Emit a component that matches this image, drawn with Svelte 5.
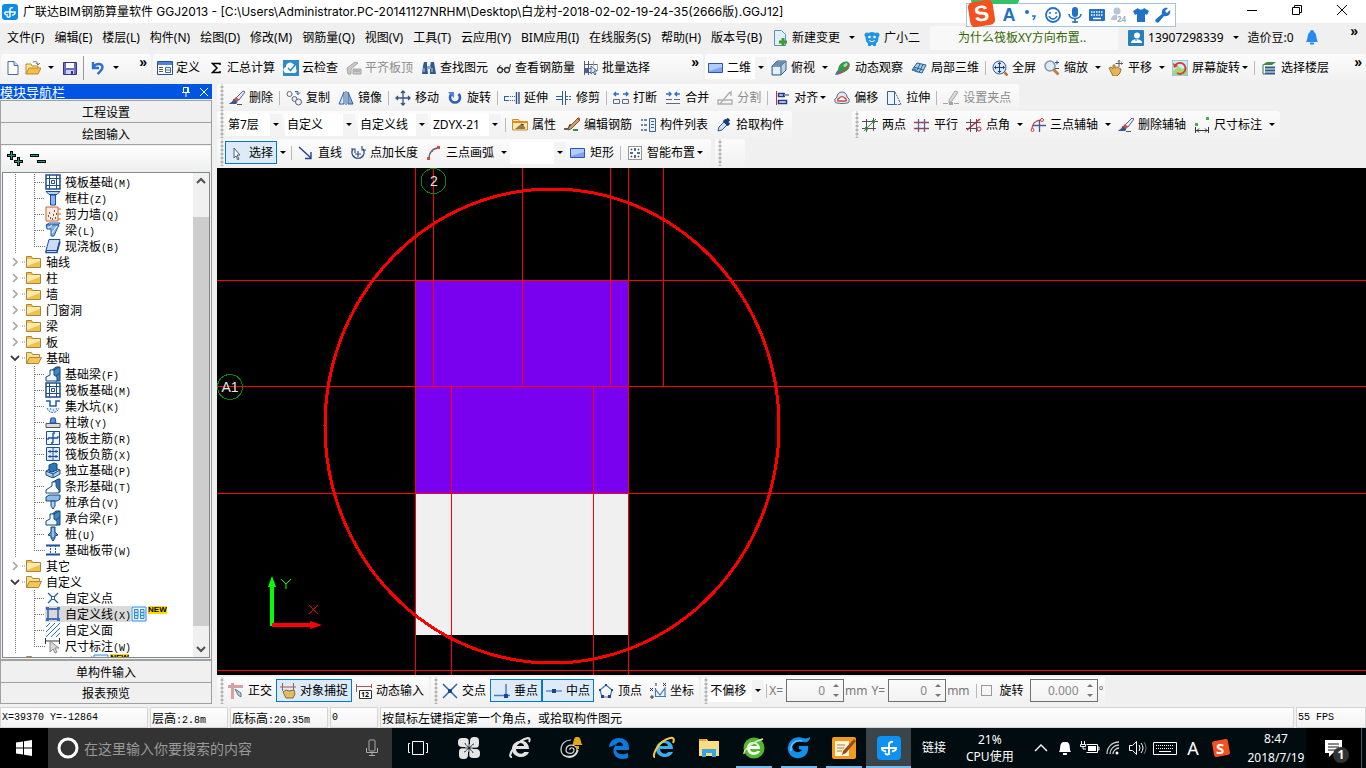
<script>
	const icons = {
		app: `<rect width="16" height="16" rx="3" fill="#0c8ee8"/><path d="M8 13V5a2 2 0 0 1 3-1M3 8h10a2.500 2.500 0 0 1-3 3M3 8a2 2 0 0 0 3 2.500M8 13a2 2 0 0 1-3-1" fill="none" stroke="#fff" stroke-width="1.500"/>`,
		newdoc: `<path d="M3 1.500h6l4 4v9H3z" fill="#fff" stroke="#456c9c"/><path d="M9 1.500v4h4" fill="#cfe0f5" stroke="#456c9c"/>`,
		open: `<path d="M1 14V4h5l1 2h6v3" fill="#ffe79a" stroke="#b98a2c"/><path d="M1 14l3-6h12l-3 6z" fill="#f7bd4a" stroke="#b98a2c"/><path d="M8 2c3-1 5 0 5 3m-2-2 2 2 2-2" fill="none" stroke="#6b7c8c"/>`,
		save: `<path d="M1.500 2.500h13v12h-13z" fill="#6a6bc8" stroke="#33348c"/><path d="M4 3h8v5H4z" fill="#fff"/><path d="M4 10h8v4H4z" fill="#cfd3ea"/><path d="M9 11h2v3H9z" fill="#33348c"/>`,
		undo: `<path d="M3 2v6h6M3.500 7c2-4 9-4 9 0 0 3-2 4-5 7" fill="none" stroke="#2f6fd0" stroke-width="2.400"/>`,
		define: `<path d="M.5 1.500h15v13H.5z" fill="#fff" stroke="#2a4f93"/><path d="M1 2h14v3H1z" fill="#4c83d8"/><path d="M2 7.500h4M2 9.500h4M2 11.500h4" stroke="#555"/><path d="M8.500 7.500h5v5h-5z" fill="#fff" stroke="#456c9c"/><path d="M8 10h6" stroke="#456c9c"/>`,
		sigma: `<path d="M12 5V3.500H4.500L9 8l-4.500 4.500H12V11" fill="none" stroke="#000" stroke-width="1.500"/>`,
		cloudcheck: `<rect width="16" height="16" fill="#2e8bcb"/><path d="M4 13a3 3 0 0 1-1-6 4 4 0 0 1 7-3 4 4 0 0 1 3 5 2.500 2.500 0 0 1-1 4z" fill="#fff"/><path d="M5 8l2.500 2.500L12 5" fill="none" stroke="#2e8bcb" stroke-width="1.600"/>`,
		flat: `<path d="M1 8l8-6 3 1-7 6v5H2zM7 9h8v5H7z" fill="#c9c9c9" stroke="#a6a6a6"/><path d="M8 11h6" stroke="#999"/>`,
		find: `<path d="M3 2h3v4l1 8H1l1-8zM10 2h3l2 12H9V6z" fill="#33598f"/><path d="M6 6h4v3H6z" fill="#7ea5d8"/><path d="M3 8v4M11 8v4" stroke="#b9d1f0"/>`,
		glasses: `<circle cx="4" cy="10" r="2.500" fill="none" stroke="#333" stroke-width="1.300"/><circle cx="11" cy="10" r="2.500" fill="none" stroke="#333" stroke-width="1.300"/><path d="M6.500 9.500h2M1.500 9l3-4M13.500 9l1-5" stroke="#333" fill="none"/>`,
		batch: `<path d="M1.500 1v14M5.500 1v14M1 4.500h13M1 8.500h8M1 12.500h8" stroke="#5a5a6a"/><path d="M10.500 1v5M14.500 4v7" stroke="#9ba3ae"/><path d="M8 6v8l2-2 2 3 1-1-2-3h3z" fill="#dce8f6" stroke="#4d6b94"/><path d="M2 9h3v3H2z" fill="#3b60c8"/>`,
		rect: `<path d="M.5 3.500h14v9H.5z" fill="#7ea5f2" stroke="#2f55a8"/><path d="M1 4h13v3L1 11z" fill="#b4ccfa"/>`,
		cube: `<path d="M1 6l5-5h9v9l-5 5H1z" fill="#b8d3ee" stroke="#3d5f87"/><path d="M1 6h9l5-5M10 6v9" fill="none" stroke="#3d5f87"/><path d="M1 6l5-5h9l-5 5z" fill="#6d8fb4"/><path d="M2 7h7v7H2z" fill="#e3effa"/>`,
		orbit: `<path d="M0 15c1-4 7-10 11-12l3 5C10 12 5 15 0 15z" fill="#4a6fa8"/><ellipse cx="9" cy="7" rx="6.500" ry="4.500" transform="rotate(-40 9 7)" fill="#2f9a48"/><ellipse cx="10.500" cy="5" rx="2.500" ry="1.500" transform="rotate(-40 10.500 5)" fill="#9be8a4"/><path d="M2 14c4-1 9-5 12-10" stroke="#d0463c" fill="none" stroke-width="1.200"/>`,
		local3d: `<path d="M1 10l5-7 9 2-4 8z" fill="#a8cde8" stroke="#2b5e8c"/><path d="M5 12l4-8M8 12.500l4-8M3 7l9 3" stroke="#2b5e8c"/><path d="M1 10l3-2 3 5z" fill="#3f7fb8"/>`,
		full: `<circle cx="7.500" cy="7.500" r="6.500" fill="#d5e6fa" stroke="#3c5f92"/><path d="M7.500 2.500v10M2.500 7.500h10M6 4l1.500-1.500L9 4M6 11l1.500 1.500L9 11M4 6 2.500 7.500 4 9M11 6l1.500 1.500L11 9" fill="none" stroke="#1f3f7a"/><path d="M12.500 12.500l3 3" stroke="#b4732f" stroke-width="2.500"/>`,
		zoom: `<circle cx="6" cy="6" r="5" fill="#dcebf7" stroke="#8797a8" stroke-width="1.500"/><path d="M9.500 9.500l5 5" stroke="#c08038" stroke-width="3"/><path d="M11 2.500h4M13 .5v4M11 8.500h4" stroke="#2d4f87"/>`,
		pan: `<path d="M1 8l2-1 2 2V5h2v3l2-1 4 2-1 4-3 3H5z" fill="#e4b457" stroke="#9c7430"/><path d="M11 0v7M7.500 3.500h7M10 1.500 11 .5l1 1M13.500 2.500l1 1-1 1" fill="none" stroke="#555c6a"/>`,
		screenrot: `<rect width="16" height="16" fill="#cfe9f6" stroke="#65aac8"/><path d="M1 11l5-5 4 3 5-2v8H1z" fill="#a9d678"/><path d="M3 6a5.500 5.500 0 1 1 2 7" fill="none" stroke="#d23b32" stroke-width="1.800"/><path d="M1 3l1 5 4-2z" fill="#d23b32"/>`,
		floor: `<path d="M1 5l5-3h9l-4 3z" fill="#3b8a4a"/><path d="M4 7.500h10M4 10.500h10M4 13.500h10" stroke="#2f5c86" stroke-width="2"/><path d="M2 5v9h2" stroke="#2f7a4a" fill="none"/>`,
		brush: `<path d="M14 1l2 1-6 8-3-2z" fill="#e6eefb" stroke="#52617d"/><path d="M7 7l3 3-3 3-3-3z" fill="#c8524c"/><path d="M4 9c0 3-2 3-4 5h7c2-1 1-3 0-3z" fill="#39578f"/><path d="M8 14.500h5" stroke="#555"/>`,
		copy: `<circle cx="3.500" cy="4" r="2.500" fill="none" stroke="#667"/><circle cx="8.500" cy="9" r="2.500" fill="#e4ebf5" stroke="#667"/><circle cx="12.500" cy="12" r="3" fill="#eef3fa" stroke="#4d5f80"/><path d="M9 1.500h3v3m-2-2 2 2 2-2" stroke="#2e5ea8" fill="none"/>`,
		mirror: `<path d="M6 2v12H1z" fill="#dbe9fa" stroke="#2f5f9c"/><path d="M10 2v12h5z" fill="#8bb1e0" stroke="#2f5f9c"/><path d="M8 1v14" stroke="#2f5f9c"/>`,
		move: `<path d="M8 1v14M1 8h14M6 3l2-2 2 2M6 13l2 2 2-2M3 6 1 8l2 2M13 6l2 2-2 2" fill="none" stroke="#3a5478" stroke-width="1.300"/>`,
		rotate: `<path d="M4.500 4A5 5 0 1 0 11.500 4" fill="none" stroke="#2a5fc0" stroke-width="2.600"/><path d="M1 2h6v6z" fill="#4a85e0"/>`,
		extend: `<path d="M0 6.500h5M0 10.500h5M.5 6v5" stroke="#2f5f9c"/><path d="M6 6.500h5M6 10.500h5" stroke="#2f5f9c" stroke-dasharray="1 1"/><path d="M12.500 2v12M15 2v12" stroke="#2b4d80" stroke-width="1.400"/>`,
		trim: `<path d="M6.500 1v14M9.500 1v14" stroke="#2b5a8c"/><path d="M0 6.500h6M0 9.500h6" stroke="#2f5f9c"/><path d="M10 6.500h6M10 9.500h6" stroke="#2f5f9c" stroke-dasharray="2 1"/>`,
		break: `<path d="M1 4h5M3 2 1 4l2 2M10 4h5m-2-2 2 2-2 2" fill="none" stroke="#2f6fc0" stroke-width="1.400"/><path d="M.5 9.500h6v4h-6zM9.500 9.500h6v4h-6z" fill="#eef3fa" stroke="#5c6b80"/>`,
		merge: `<path d="M1 4h5M4 2l2 2-2 2M15 4h-5m2-2-2 2 2 2" fill="none" stroke="#2f6fc0" stroke-width="1.400"/><path d="M1 9.500h14M1 13.500h14" stroke="#5c6b80"/><path d="M7 9.500h2" stroke="#fff"/>`,
		split: `<path d="M1 10h14v4H1zM3 14l10-12M10 5l4-3v4" fill="none" stroke="#b0b0b0" stroke-width="1.400"/>`,
		align: `<path d="M2.500 1v14" stroke="#c0303c"/><path d="M4.500 3.500h5v3h-5zM4.500 10.500h8v3h-8z" fill="#dbe6fa" stroke="#1f3c8c" stroke-width="1.500"/><path d="M9 5h6M11 3 9 5l2 2" fill="none" stroke="#1f3c8c"/>`,
		offset: `<path d="M1 12a4 4 0 0 1 2-5 5 5 0 0 1 10 0 4 4 0 0 1 2 5c0 2-14 2-14 0z" fill="#dfe7f0" stroke="#586b88"/><path d="M4 11a2 2 0 0 1 1.500-3 3 3 0 0 1 5 0 2 2 0 0 1 1.500 3z" fill="#fff" stroke="#d0453c" stroke-width="1.300"/>`,
		stretch: `<path d="M1.500 1.500h7v13h-7z" fill="#eef4fb" stroke="#3b5f94"/><path d="M9 2l6 12.500H9" fill="none" stroke="#3b5f94" stroke-dasharray="2 1"/>`,
		grip: `<path d="M6 10l6-9 3 1-6 9-3 2z" fill="#ddd" stroke="#a5a5a5"/><path d="M0 13.500h5M11 13.500h5" stroke="#a5a5a5"/><path d="M6 12h4v3H6z" fill="#a5a5a5"/>`,
		props: `<path d="M.5 13V2.500h6l1 2h8V13z" fill="#ffe8b0" stroke="#d08a28"/><path d="M1 5h14" stroke="#e08a20" stroke-width="2"/><path d="M3 12l6-5 4 3v2z" fill="#8a7a4c"/><path d="M9 7l3 1" stroke="#333"/>`,
		editbar: `<path d="M0 12h4l2-4h4" fill="none" stroke="#333" stroke-width="1.400"/><path d="M5 10l9-9 2 2-9 9-3 1z" fill="#caa263" stroke="#7a5b2c"/><path d="M9 13h5" stroke="#3b8a4a" stroke-width="2"/><path d="M14 1l2 2" stroke="#c03c3c" stroke-width="2"/>`,
		list: `<path d="M1 3h2M1 8h2M1 13h2M4 3h3M4 8h3M4 13h3" stroke="#42628c" stroke-width="1.500"/><path d="M9.500 1.500h6v13h-6z" fill="#e6eefb" stroke="#42628c"/><path d="M11 4.500h3M11 7.500h3M11 10.500h3" stroke="#42628c"/>`,
		pick: `<path d="M2 14l1-4 5-5 3 3-5 5z" fill="#cfe2f7" stroke="#35598a"/><path d="M8 3l5 5M10 5l3-3" stroke="#173d78" stroke-width="3.500"/>`,
		twopt: `<path d="M4.500 2v13M11.500 1v13M0 4.500h16M0 11.500h14" stroke="#5c4a58"/><path d="M2 14L14 2" stroke="#2f8f3c"/><path d="M3 10h3v3H3zM10 3h3v3h-3z" fill="#2f8f3c"/>`,
		parallel: `<path d="M4.500 2v13M10.500 2v13" stroke="#5560a0" stroke-width="1.300"/><path d="M0 5.500h15M0 11.500h15" stroke="#8a4a58" stroke-width="1.300"/>`,
		ptangle: `<path d="M4.500 2v13M10.500 2v13M0 5.500h15M0 11.500h10" stroke="#4a5068"/><path d="M1 13L14 2" stroke="#c02838" stroke-width="1.500"/><circle cx="13" cy="12" r="2" fill="none" stroke="#c02838"/>`,
		threept: `<path d="M2 13C2 6 6 3 12 3" fill="none" stroke="#c84048" stroke-width="1.300"/><path d="M9.500 3v12M3 8.500h13" stroke="#48589c" stroke-width="1.300"/><circle cx="12" cy="3" r="1.500" fill="#fff" stroke="#c84048"/><circle cx="2.500" cy="13" r="1.500" fill="#fff" stroke="#c84048"/>`,
		dim: `<path d="M1.500 10v6M14.500 10v6M2 13.500h12M5 11.500l-2 2 2 2M11 11.500l2 2-2 2" stroke="#333" fill="none"/><path d="M1 6h3v3H1zM12 0h3v3h-3z" fill="#49b04c"/>`,
		arrow: `<path d="M5 3v10l2-2 2 4 1-1-2-4h3z" fill="#fff" stroke="#4b5f78"/>`,
		line: `<path d="M1 2l12 11M13 7v6.500H7" fill="none" stroke="#23438c" stroke-width="1.400"/>`,
		ptlen: `<path d="M3 4a6 6 0 1 0 10 0" fill="none" stroke="#34507c" stroke-width="1.500"/><path d="M8 6v6M5 9h6M1 4h4v4M12 1v4h4" fill="none" stroke="#34507c" stroke-width="1.200"/>`,
		arc: `<path d="M3 14C3 7 7 3 13 3" fill="none" stroke="#4f6288" stroke-width="1.400"/><path d="M1 12h3v3H1zM5 5h2v2H5zM11 1h3v3h-3z" fill="#d0503c"/>`,
		smart: `<path d="M1.500 1.500h13v13h-13z" fill="#fff" stroke="#333" stroke-dasharray="1 1"/><path d="M8 3v3M8 10v3M3 8h3M10 8h3M4 4l1 1M12 4l-1 1M4 12l1-1M12 12l-1-1" stroke="#1d3d70" stroke-width="1.500"/>`,
		ortho: `<path d="M0 3.500h15M4.500 0v16" stroke="#d8a0a0" stroke-width="3"/><path d="M7 6l6 4v4l-3-2z" fill="#b9cad8" stroke="#5e7891"/>`,
		snap: `<path d="M0 4h16M2.500 0v8M13.500 0v8" stroke="#a05858"/><path d="M3 9l3-2 3 1 5-1 1 4-2 4H6z" fill="#e2bd68" stroke="#8a6a30"/>`,
		dynin: `<path d="M.5 1v8M15.500 1v4M1 3.500h14" stroke="#9b5a5a"/><path d="M3.500 7.500h12v8h-12z" fill="#fff" stroke="#333"/><text x="5" y="14" font-size="7" font-weight="bold">12</text>`,
		cross: `<path d="M1 1l14 14M15 1L1 15" stroke="#2f65b0" stroke-width="1.500"/><path d="M6 6h4v4H6z" fill="#1c458c"/>`,
		perp: `<path d="M0 12.500h16M12 1v11" stroke="#4880bc" stroke-width="1.500"/><path d="M10 11h4v4h-4z" fill="#1c458c"/>`,
		mid: `<path d="M0 8h16" stroke="#4880bc" stroke-width="1.300"/><path d="M6 6h4v4H6z" fill="#1c458c"/>`,
		vertex: `<path d="M8 2l6 5-2 7H4L2 7z" fill="none" stroke="#3f77bc" stroke-width="1.200"/><path d="M7 1h2v2H7zM1 6h2v2H1zM13 6h2v2h-2zM3 12h3v3H3zM10 12h3v3h-3z" fill="#1c458c"/>`,
		coord: `<path d="M5.500 5v8.500H16M6 7l4 5 5-7v8" fill="none" stroke="#3f77bc" stroke-width="1.200"/><path d="M0 5l3 3M3 5l-3 3M13 0l3 3M16 0l-3 3M6 0v3M1 13h2v2H1z" fill="none" stroke="#333"/>`,
		newchange: `<path d="M2.500 .5h7l4 4v11h-11z" fill="#dff0fb" stroke="#5b93bd"/><path d="M11 8v8M7 12h8" stroke="#3f9c2c" stroke-width="3"/>`,
		bear: `<circle cx="8" cy="8.500" r="6.500" fill="#2196e0"/><circle cx="3" cy="5" r="2.500" fill="#2196e0"/><circle cx="13" cy="5" r="2.500" fill="#2196e0"/><path d="M4 13h3v3H4zM9 13h3v3H9z" fill="#2196e0"/><circle cx="5.500" cy="7" r="1.300" fill="#fff"/><circle cx="10.500" cy="7" r="1.300" fill="#fff"/><path d="M5 10c1 2 5 2 6 0" stroke="#fff" fill="none"/>`,
		user: `<rect width="16" height="16" rx="1" fill="#2580bb"/><circle cx="9" cy="5.500" r="3" fill="#fff"/><path d="M3 13c0-5 11-5 11 0z" fill="#fff"/><path d="M8 9v2" stroke="#2580bb"/>`,
		bell: `<path d="M2 12c2-2 1-9 4-10a2 2 0 0 1 4 0c3 1 2 8 4 10z" fill="#268af0"/><path d="M6 13.500h4" stroke="#268af0" stroke-width="2"/>`,
		closed: `<path d="M6 4l4 4-4 4" fill="none" stroke="#a6a6a6" stroke-width="1.600"/><path d="M15 8h4" stroke="#888" stroke-dasharray="1 1"/>`,
		opened: `<path d="M4 6l4 4 4-4" fill="none" stroke="#404040" stroke-width="1.800"/><path d="M15 8h4" stroke="#888" stroke-dasharray="1 1"/>`,
		pipe: `<path d="M8.500 0v16" stroke="#777" stroke-dasharray="1 1"/>`,
		tee: `<path d="M8.500 0v16M9 8.500h10" stroke="#777" stroke-dasharray="1 1"/>`,
		elbow: `<path d="M8.500 0v8M8 8.500h11" stroke="#777" stroke-dasharray="1 1"/>`,
		folder: `<path d="M.5 13.500v-11h5l1 2h8v9z" fill="#f3c04c" stroke="#a98540"/><path d="M1 5h13v2L1 12z" fill="#fdeaa8"/>`,
		folderopen: `<path d="M.5 13.500v-11h5l1 2h7v3" fill="#fbe08c" stroke="#b08a3a"/><path d="M.5 13.500l3-6h12l-3 6z" fill="#f3c458" stroke="#b08a3a"/>`,
		raft: `<path d="M1 1h14v14H1z" fill="#fff" stroke="#1d4d8c" stroke-width="1.500"/><path d="M4.500 1v14M11.500 1v14M1 4.500h14M1 11.500h14" stroke="#1d4d8c"/><path d="M6.500 6.500h3v3h-3z" fill="none" stroke="#1d4d8c"/>`,
		column: `<path d="M1 1.500h14l-3 3H4z" fill="#b7d3f4" stroke="#1d4d9c"/><path d="M5.500 5h5v10h-5z" fill="#8cb7ee" stroke="#1d4d9c"/>`,
		wall: `<path d="M1 1h12v14H1z" fill="#fbe9df" stroke="#c8672c"/><path d="M3 10h1M5 12h1M8 9h1M10 12h1M7 13h1M4 7h1M11 8h1M9 5h1" stroke="#333" stroke-width="1.500"/><path d="M13 3h3M13 8h3M13 13h3" stroke="#c8672c"/>`,
		beam: `<path d="M1 3h12l2-2H4z" fill="#c8dcf4" stroke="#1d5bac"/><path d="M1 3h13l-2 4-3 7H6V7H2z" fill="#8ab5e8" stroke="#1d5bac"/><path d="M3 6l4-3M7 11l5-7" stroke="#fff"/>`,
		slab: `<path d="M4 1.500h11l-3 11H1z" fill="#c7dcf8" stroke="#1d4d9c"/><path d="M1 12.500v2h11l3-11" fill="none" stroke="#1d4d9c" stroke-width="1.500"/>`,
		fbeam: `<path d="M6 5l5-4h4v14h-4l-5-3z" fill="#3f86c8" stroke="#164878"/><path d="M1 15v-4l4-2V4h4v5l3 2v4z" fill="#eef6ff" stroke="#164878"/><path d="M9 4l5-3M11 10l4-3" stroke="#164878"/>`,
		pit: `<path d="M1 3h4v5h6V3h4" fill="none" stroke="#1d5bac" stroke-width="1.500"/><path d="M2 10c2 6 10 6 12 0" fill="#d9e9fa" stroke="#3f77bc" stroke-dasharray="2 1"/><path d="M5 11h1M8 12h1M11 11h1" stroke="#1d5bac"/>`,
		pier: `<path d="M1 9.500h14v4H1z" fill="#ddd" stroke="#555"/><path d="M5 9l1-5h4l1 5z" fill="#5e93da" stroke="#1d4d9c"/>`,
		mainbar: `<path d="M1.500 1.500h13v13h-13z" fill="#eef6ff" stroke="#1d4d9c"/><path d="M8 3v10M3 8h10M10 3H8M3 10V8M13 6v2M6 13h2" stroke="#1d4d9c" stroke-width="1.300"/>`,
		negbar: `<path d="M1.500 1.500h13v13h-13z" fill="#dfebfa" stroke="#1d4d9c"/><path d="M8 2v12M3 5.500h10M3 10.500h10M5 4v3M11 4v3M5 9v3M11 9v3" stroke="#1d4d9c"/>`,
		isolated: `<path d="M1 9l7-4 7 3v4l-7 4-7-3z" fill="#a9d0f4" stroke="#164878"/><path d="M4 3l5-2 3 1v6l-5 2-3-1z" fill="#2f75b8" stroke="#164878"/><path d="M1 9l7 3 7-4M8 12v4" fill="none" stroke="#164878"/>`,
		strip: `<path d="M8 4l5-3h2v13h-4z" fill="#2f75b8" stroke="#164878"/><path d="M1 15v-3l3-2 3-2V4h4v4l1 2 2 2v3z" fill="#fff" stroke="#1d4d8c"/>`,
		pilecap: `<path d="M1 3l3-2h11v4l-3 2H1z" fill="#8cbcec" stroke="#164878"/><path d="M6 7h4v5l-2 3-2-3z" fill="#a9d0f4" stroke="#164878"/>`,
		pile: `<path d="M6 1h4v5l3 3-3 1v2l-2 3-2-3v-2L3 9l3-3z" fill="#4f90d8" stroke="#164878"/><path d="M8 2v9" stroke="#d9e9fa"/>`,
		band: `<path d="M1 3.500h14M1 12.500h14" stroke="#1d4d9c" stroke-width="2"/><path d="M5.500 3v10M10.500 3v10" stroke="#1d5bac" stroke-dasharray="2 1"/>`,
		cpoint: `<path d="M3 3l10 10M13 3L3 13" stroke="#1d5bac" stroke-width="1.200"/><path d="M6.500 6.500h3v3h-3z" fill="#fff" stroke="#1d5bac"/>`,
		cline: `<path d="M3 3h10v10H3z" fill="none" stroke="#1d4d9c" stroke-width="1.300"/><path d="M1 1h3v3H1zM12 1h3v3h-3zM1 12h3v3H1zM12 12h3v3h-3z" fill="#2f6fd0"/>`,
		carea: `<path d="M1 5l4-4M1 10l9-9M1 15L15 1M6 15l9-9M11 15l4-4" stroke="#2f6fd0"/>`,
		cdim: `<path d="M.5 0v6M14.500 0v6M1 3h13" stroke="#333"/><path d="M5 3v11l3-3 2 4 2-1-2-4h4z" fill="#d9d9d9" stroke="#8a8a8a"/>`,
		book: `<path d="M1 1h14v14H1z" fill="#e8f5ff" stroke="#2f8bd8"/><path d="M3.500 3.500h3.500v9H3.500zM9.500 3.500H13v9H9.500z" fill="#bfe2ff" stroke="#2f8bd8"/><path d="M4 6.500h3M4 9.500h3M10 6.500h3M10 9.500h3" stroke="#2f8bd8"/>`,
		expand: `<path d="M4.500 0v9M0 4.500h9M11.500 6v9M7 10.500h9" stroke="#000" stroke-width="3"/><path d="M4.500 1v7M1 4.500h7M11.500 7v7M8 10.500h7" stroke="#1aa088"/>`,
		collapse: `<path d="M0 4.500h9M7 10.500h9" stroke="#000" stroke-width="3"/><path d="M1 4.500h7M8 10.500h7" stroke="#1aa088"/>`,
		comma: `<circle cx="4" cy="5" r="2" fill="#1f72c4"/><path d="M9 9h3c0 2-1 3-2 4" stroke="#1f72c4" stroke-width="1.500" fill="none"/>`,
		smile: `<circle cx="8" cy="8" r="7" fill="none" stroke="#1f72c4" stroke-width="1.800"/><path d="M5 5v2M11 5v2M4 9c2 4 6 4 8 0" stroke="#1f72c4" stroke-width="1.500" fill="none"/>`,
		mic: `<rect x="5" y="0" width="6" height="10" rx="3" fill="#1f72c4"/><path d="M2 7c0 6 12 6 12 0M8 12v4M5 15h6" stroke="#1f72c4" stroke-width="1.600" fill="none"/>`,
		kbd: `<rect y="2" width="16" height="12" rx="1" fill="#1f72c4"/><path d="M2 5h12M2 8h12" stroke="#fff" stroke-width="1.500" stroke-dasharray="1.500 1"/><path d="M4 11.500h8" stroke="#fff" stroke-width="1.500"/>`,
		person: `<circle cx="6" cy="4" r="3.500" fill="#b7c3d8"/><path d="M0 13c0-7 11-7 11 0z" fill="#b7c3d8"/><rect x="6" y="8" width="10" height="8" fill="#fff"/><text x="6" y="15" font-size="8" font-weight="bold" fill="#9fb0ca">24</text>`,
		shirt: `<path d="M5 1c1 2 5 2 6 0l5 3-2 4-2-1v8H4V7L2 8 0 4z" fill="#1f72c4"/>`,
		wrench: `<path d="M1 15c-1-1-1-2 0-3l6-5c-1-4 2-7 6-6l-3 3 2 2 3-3c1 4-2 7-6 6l-5 6c-1 1-2 1-3 0z" fill="#1f72c4"/>`,
		min: `<path d="M3 8.500h10" stroke="#000"/>`,
		restore: `<path d="M3.500 5.500h7v7h-7zM5.500 5V3.500h7v7H11" fill="none" stroke="#000"/>`,
		close: `<path d="M3 3l10 10M13 3L3 13" stroke="#000"/>`,
		pin: `<path d="M5.500 8V3.500h5V8M9.500 4v4M4 8.500h8M8 9v4" fill="none" stroke="#fff"/>`,
		closew: `<path d="M4 4l8 8M12 4l-8 8" stroke="#fff"/>`,
		up: `<path d="M4 10l4-4 4 4" fill="none" stroke="#505050" stroke-width="2"/>`,
		down: `<path d="M4 6l4 4 4-4" fill="none" stroke="#505050" stroke-width="2"/>`
	};

	// 24 x 24 artwork for the task bar
	const big = {
		win: `<path d="M4 6.500l7-1v6H4zM12 5.300l8-1.200v7.400h-8zM4 12.500h7v6l-7-1zM12 12.500h8v7.400l-8-1.200z" fill="#fff"/>`,
		circle: `<circle cx="12" cy="12" r="9" fill="none" stroke="#fff" stroke-width="3"/>`,
		mic: `<rect x="9" y="4" width="6" height="11" rx="1" fill="none" stroke="#aaa"/><path d="M6.500 12v4.500h11V12M12 17v3M9 19.500h6" fill="none" stroke="#aaa"/>`,
		task: `<path d="M6.500 5.500h11v13h-11zM4 7.500H2.500v9H4M20 7.500h1.500v9H20" fill="none" stroke="#fff"/>`,
		flower: `<g fill="#e6e6e6"><rect x="1" y="2" width="11" height="9" rx="4"/><rect x="13" y="1" width="9" height="11" rx="4"/><rect x="2" y="12" width="9" height="11" rx="4"/><rect x="12" y="13" width="11" height="9" rx="4"/><circle cx="12" cy="12" r="4"/></g><path d="M12 12C9 12 3 12 2 11M12 12c0-3 0-9 1-10M12 12c3 0 9 0 10 1M12 12c0 3 0 9-1 10M12 12c-1-2-4-3-4-5M12 12c2-1 3-4 5-4M12 12c1 2 4 3 4 5M12 12c-2 1-3 4-5 4" fill="none" stroke="#000c10" stroke-width=".8"/>`,
		ieGrey: `<path d="M21 13H8c0 5 7 6 8 3h5C18 24 4 22 4 13 4 3 21 1 21 13zM8 10h8c0-4-8-4-8 0z" fill="#e4e4e4"/><path d="M4 21C-2 22 8 4 20 2c2 0 2 2 1 4" fill="none" stroke="#e4e4e4" stroke-width="2"/>`,
		swirl: `<path d="M11 14c-1-3 4-3 4 0 0 5-8 4-8 0 0-7 11-6 11 0 0 8-16 9-16 0C2 7 7 4 12 4M4 19c7 5 14 1 15-5" fill="none" stroke="#ddd" stroke-width="1.200"/><path d="M13 9c2-1 1-7 4-8h2c4 1 2 7 5 8zM17 10h3v3h-3z" fill="#e6a80c"/>`,
		edge: `<path d="M2 11C3-1 22-1 22 12v2H9c1 5 8 5 12 3v5C8 27 2 14 10 8c-4 1-6 3-8 3zM9 10h7c0-5-7-5-7 0z" fill="#0a7bdc"/>`,
		ie: `<path d="M21 13H8c0 5 7 6 8 3h5C18 24 4 22 4 13 4 3 21 1 21 13zM8 10h8c0-4-8-4-8 0z" fill="#3aaef0"/><path d="M3 21C-1 21 6 5 18 2c3-1 5 1 3 5" fill="none" stroke="#f4cb3a" stroke-width="2"/>`,
		files: `<path d="M2 3h8l1 2h11v15H2z" fill="#fbdc83"/><path d="M2 4h7" stroke="#e8a72c" stroke-width="2"/><path d="M5 21v-8h14v8h-4v-4H9v4z" fill="#37a6de"/>`,
		ie360: `<circle cx="12" cy="12" r="10.500" fill="#52b82e"/><path d="M18 13H8c0 4 6 4 7 2h3C16 21 5 20 5 12 5 4 18 4 18 13zM8 10h7c0-3-7-3-7 0z" fill="#fff"/><path d="M2 18C1 14 12 5 21 3" fill="none" stroke="#d7f4b8" stroke-width="1.500"/>`,
		gcloud: `<path d="M23 1c0 4-3 6-7 5-9-2-12 3-10 7 1 4 7 4 9 1l-3-1v-3h9c2 15-18 16-20 4C0 5 8-1 16 2c3 1 5 0 7-1z" fill="#1490ea"/><path d="M4 15c-1-6 3-11 11-10" fill="none" stroke="#63c4ff" stroke-width="1.500"/>`,
		note: `<rect x="0" y="1" width="24" height="22" rx="2" fill="#f29a1c"/><path d="M3 5h14v15H3z" fill="#fff5d8"/><path d="M5 9h8M5 12h7M5 15h5" stroke="#b07a30"/><path d="M22 3L11 15l-1 4 4-2L24 5z" fill="#9a4a20"/>`,
		app: `<rect width="24" height="24" rx="4" fill="#0b92f2"/><path d="M12 19V8a3 3 0 0 1 4-2M4 12h15a3 3 0 0 1-4 3M5 12a3 3 0 0 0 4 3M12 18a3 3 0 0 1-4-1" fill="none" stroke="#fff" stroke-width="2"/>`,
		chev: `<path d="M6 15l6-6 6 6" fill="none" stroke="#fff" stroke-width="1.400"/>`,
		bell: `<path d="M6 16c2-2 0-9 4-10h4c4 1 2 8 4 10zM10 17h4v2h-4z" fill="#fff"/>`,
		battery: `<path d="M9.500 8.500h11v8h-11M21 11h1v3h-1" fill="none" stroke="#fff"/><path d="M11 10h8v5h-8z" fill="#fff"/><path d="M4.500 5v3M7.500 5v3M3.500 8.500h5v2h-5zM6 11v2h3" fill="none" stroke="#fff"/>`,
		wifi: `<path d="M6 18C6 11 11 6 18 6M9 18c0-5 4-9 9-9M12 18c0-3 3-6 6-6" fill="none" stroke="#ccc" stroke-width="1.300"/><circle cx="16" cy="17" r="1.500" fill="#fff"/>`,
		vol: `<path d="M4.500 9.500h3l4-4v13l-4-4h-3z" fill="none" stroke="#fff"/><path d="M14 9q2 3 0 6M16 7q4 5 0 10" fill="none" stroke="#fff"/><path d="M19 6q4 6 0 12" fill="none" stroke="#777"/>`,
		kbd: `<path d="M.5 6.500h23v12H.5z" fill="none" stroke="#fff"/><path d="M3 9.500h18M3 12.500h18" stroke="#fff" stroke-dasharray="1 1"/><path d="M6 15.500h12" stroke="#fff"/>`,
		sogou: `<rect x="4" y="4" width="16" height="16" rx="2" fill="#f4511e" transform="rotate(-10 12 12)"/><text x="7" y="18" font-size="15" font-weight="bold" fill="#fff">S</text>`,
		notice: `<path d="M3 4h17v13h-9l-4 4v-4H3z" fill="#fff"/><path d="M6 8h11M6 11h11M6 14h7" stroke="#111"/>`
	};

	const menus = ["文件(F)", "编辑(E)", "楼层(L)", "构件(N)", "绘图(D)", "修改(M)", "钢筋量(Q)", "视图(V)", "工具(T)", "云应用(Y)", "BIM应用(I)", "在线服务(S)", "帮助(H)", "版本号(B)"];

	const sep = { sep: true };

	const mainBar = [
		{ icon: "define", label: "定义" },
		{ icon: "sigma", label: "汇总计算" },
		{ icon: "cloudcheck", label: "云检查" },
		{ icon: "flat", label: "平齐板顶", off: true },
		{ icon: "find", label: "查找图元" },
		{ icon: "glasses", label: "查看钢筋量" },
		{ icon: "batch", label: "批量选择" }
	];

	const viewBar = [
		{ icon: "cube", label: "俯视", drop: true },
		{ icon: "orbit", label: "动态观察" },
		{ icon: "local3d", label: "局部三维" },
		sep,
		{ icon: "full", label: "全屏" },
		{ icon: "zoom", label: "缩放", drop: true },
		{ icon: "pan", label: "平移", drop: true },
		{ icon: "screenrot", label: "屏幕旋转", tight: true },
		sep,
		{ icon: "floor", label: "选择楼层" }
	];

	const editBar = [
		{ icon: "brush", label: "删除" },
		sep,
		{ icon: "copy", label: "复制" },
		{ icon: "mirror", label: "镜像" },
		sep,
		{ icon: "move", label: "移动" },
		{ icon: "rotate", label: "旋转" },
		sep,
		{ icon: "extend", label: "延伸" },
		{ icon: "trim", label: "修剪" },
		sep,
		{ icon: "break", label: "打断" },
		{ icon: "merge", label: "合并" },
		{ icon: "split", label: "分割", off: true },
		sep,
		{ icon: "align", label: "对齐", tight: true },
		{ icon: "offset", label: "偏移" },
		{ icon: "stretch", label: "拉伸" },
		sep,
		{ icon: "grip", label: "设置夹点", off: true }
	];

	const memberBar = [
		sep,
		{ icon: "props", label: "属性" },
		{ icon: "editbar", label: "编辑钢筋" },
		{ icon: "list", label: "构件列表" },
		{ icon: "pick", label: "拾取构件" }
	];

	const axisBar = [
		{ icon: "twopt", label: "两点" },
		{ icon: "parallel", label: "平行" },
		{ icon: "ptangle", label: "点角", drop: true },
		{ icon: "threept", label: "三点辅轴", drop: true },
		{ icon: "brush", label: "删除辅轴" },
		{ icon: "dim", label: "尺寸标注", drop: true }
	];

	const drawBar = [
		{ icon: "arrow", label: "选择", on: true, drop: true },
		sep,
		{ icon: "line", label: "直线" },
		{ icon: "ptlen", label: "点加长度" },
		{ icon: "arc", label: "三点画弧", drop: true }
	];

	const shapeBar = [
		{ icon: "rect", label: "矩形" },
		sep,
		{ icon: "smart", label: "智能布置", tight: true }
	];

	const snapBar = [
		{ icon: "ortho", label: "正交" },
		{ icon: "snap", label: "对象捕捉", on: true },
		{ icon: "dynin", label: "动态输入" }
	];

	const pointBar = [
		{ icon: "cross", label: "交点" },
		{ icon: "perp", label: "垂点", on: true },
		{ icon: "mid", label: "中点", on: true },
		{ icon: "vertex", label: "顶点" },
		{ icon: "coord", label: "坐标" }
	];

	const tree = [
		{ icon: "raft", label: "筏板基础", key: "M" },
		{ icon: "column", label: "框柱", key: "Z" },
		{ icon: "wall", label: "剪力墙", key: "Q" },
		{ icon: "beam", label: "梁", key: "L" },
		{ icon: "slab", label: "现浇板", key: "B", last: true },
		{ folder: "closed", label: "轴线" },
		{ folder: "closed", label: "柱" },
		{ folder: "closed", label: "墙" },
		{ folder: "closed", label: "门窗洞" },
		{ folder: "closed", label: "梁" },
		{ folder: "closed", label: "板" },
		{ folder: "opened", label: "基础" },
		{ icon: "fbeam", label: "基础梁", key: "F" },
		{ icon: "raft", label: "筏板基础", key: "M" },
		{ icon: "pit", label: "集水坑", key: "K" },
		{ icon: "pier", label: "柱墩", key: "Y" },
		{ icon: "mainbar", label: "筏板主筋", key: "R" },
		{ icon: "negbar", label: "筏板负筋", key: "X" },
		{ icon: "isolated", label: "独立基础", key: "P" },
		{ icon: "strip", label: "条形基础", key: "T" },
		{ icon: "pilecap", label: "桩承台", key: "V" },
		{ icon: "fbeam", label: "承台梁", key: "F" },
		{ icon: "pile", label: "桩", key: "U" },
		{ icon: "band", label: "基础板带", key: "W", last: true },
		{ folder: "closed", label: "其它" },
		{ folder: "opened", label: "自定义" },
		{ icon: "cpoint", label: "自定义点" },
		{ icon: "cline", label: "自定义线", key: "X", selected: true, fresh: true },
		{ icon: "carea", label: "自定义面" },
		{ icon: "cdim", label: "尺寸标注", key: "W", last: true },
		{ folder: "closed", label: "CAD识别", fresh: true }
	];

	const pinned = [
		{ art: "task", name: "任务视图", wide: true },
		{ art: "flower", name: "助手", wide: true },
		{ art: "ieGrey", name: "浏览器", wide: true },
		{ art: "swirl", name: "提醒", wide: true },
		{ art: "edge", name: "Edge" },
		{ art: "ie", name: "Internet Explorer" },
		{ art: "files", name: "文件资源管理器" },
		{ art: "ie360", name: "安全浏览器", running: true },
		{ art: "gcloud", name: "广联达", running: true },
		{ art: "note", name: "便签", running: true },
		{ art: "app", name: "GGJ2013", running: true, active: true }
	];

	let rotated = $state(false);
</script>

{#snippet icon(name)}
	<svg class="ico" viewBox="0 0 16 16" aria-hidden="true">{@html icons[name]}</svg>
{/snippet}

{#snippet art(name)}
	<svg class="art" viewBox="0 0 24 24" aria-hidden="true">{@html big[name]}</svg>
{/snippet}

{#snippet tools(items)}
	{#each items as t}
		{#if t.sep}
			<span class="sep"></span>
		{:else}
			<button class="tool" class:on={t.on} class:off={t.off} disabled={t.off}>
				{@render icon(t.icon)}<span>{t.label}</span>
				{#if t.tight}<i class="caret tight"></i>{/if}
			</button>
			{#if t.drop}<button class="dropper" aria-label="{t.label}选项"><i class="caret"></i></button>{/if}
		{/if}
	{/each}
{/snippet}

{#snippet combo(value, name, size)}
	<span class="combo {size}">
		<select aria-label={name}><option>{value}</option></select>
		<i class="caret"></i>
	</span>
{/snippet}

{#snippet num(value, name, size)}
	<span class="num {size}">
		<input type="text" aria-label={name} {value} disabled />
		<span class="spin"><i class="caret flip"></i><i class="caret"></i></span>
	</span>
{/snippet}

<div class="window">
	<header class="title">
		{@render icon("app")}
		<h1>广联达BIM钢筋算量软件 GGJ2013 - [C:\Users\Administrator.PC-20141127NRHM\Desktop\白龙村-2018-02-02-19-24-35(2666版).GGJ12]</h1>
		<div class="winbtns">
			<button aria-label="最小化">{@render icon("min")}</button>
			<button aria-label="还原">{@render icon("restore")}</button>
			<button aria-label="关闭">{@render icon("close")}</button>
		</div>
	</header>

	<div class="ime">
		<span class="bump"></span>
		<span class="sogou">S</span>
		<button class="letter">A</button>
		{#each ["comma", "smile", "mic", "kbd", "person", "shirt", "wrench"] as name}
			<button aria-label={name}>{@render icon(name)}</button>
		{/each}
	</div>

	<nav class="menu">
		{#each menus as m}
			<button>{m}</button>
		{/each}
		<button class="tool">{@render icon("newchange")}<span>新建变更</span></button>
		<i class="caret"></i>
		<button class="tool">{@render icon("bear")}<span>广小二</span></button>
		<a class="tip" href="#tip">为什么筏板XY方向布置..</a>
		<button class="tool">{@render icon("user")}<span>13907298339</span></button>
		<i class="caret"></i>
		<span>造价豆:0</span>
		<button aria-label="消息">{@render icon("bell")}</button>
		<span class="more">»</span>
	</nav>

	<div class="row top">
		<div class="bar files">
			<button aria-label="新建">{@render icon("newdoc")}</button>
			<button aria-label="打开">{@render icon("open")}</button>
			<i class="caret"></i>
			<button aria-label="保存">{@render icon("save")}</button>
			<span class="sep tall"></span>
			<button aria-label="撤销">{@render icon("undo")}</button>
			<i class="caret"></i>
			<span class="more">»</span>
		</div>
		<div class="bar main">
			{@render tools(mainBar)}
			<span class="more">»</span>
		</div>
		<div class="bar view">
			<span class="mode">{@render icon("rect")}{@render combo("二维", "视图模式", "s")}</span>
			{@render tools(viewBar)}
			<span class="more">»</span>
		</div>
	</div>

	<div class="body">
		<aside>
			<div class="caption">
				<span>模块导航栏</span>
				<button aria-label="固定">{@render icon("pin")}</button>
				<button aria-label="关闭面板">{@render icon("closew")}</button>
			</div>
			<button class="section">工程设置</button>
			<button class="section">绘图输入</button>
			<div class="panel">
				<div class="strip">
					<button aria-label="全部展开">{@render icon("expand")}</button>
					<button aria-label="全部折叠">{@render icon("collapse")}</button>
				</div>
				<div class="treebox">
					<ul class="tree">
						{#each tree as n}
							<li>
								{#if n.folder}
									<svg class="guide" viewBox="0 0 19 16" aria-hidden="true">{@html icons[n.folder]}</svg>
									{@render icon(n.folder === "opened" ? "folderopen" : "folder")}
								{:else}
									<svg class="guide" viewBox="0 0 19 16" aria-hidden="true">{@html icons.pipe}</svg>
									<svg class="guide" viewBox="0 0 19 16" aria-hidden="true">{@html icons[n.last ? "elbow" : "tee"]}</svg>
								{/if}
								<span class="node" class:selected={n.selected}>
									{#if !n.folder}{@render icon(n.icon)}{/if}
									<span class="name">{n.label}{#if n.key}<span class="key">({n.key})</span>{/if}</span>
								</span>
								{#if n.fresh}{@render icon("book")}<b class="new">NEW</b>{/if}
							</li>
						{/each}
					</ul>
					<div class="scroll">
						{@render icon("up")}
						<span class="thumb"></span>
						{@render icon("down")}
					</div>
				</div>
			</div>
			<button class="section">单构件输入</button>
			<button class="section">报表预览</button>
		</aside>

		<main>
			<div class="row short">
				<div class="bar gripped">{@render tools(editBar)}</div>
			</div>
			<div class="row">
				<div class="bar gripped">
					<span class="combos">
						{@render combo("第7层", "楼层", "s")}
						{@render combo("自定义", "构件类型", "m")}
						{@render combo("自定义线", "构件种类", "m")}
						{@render combo("ZDYX-21", "构件名称", "m")}
					</span>
					{@render tools(memberBar)}
				</div>
				<div class="bar gripped axis">{@render tools(axisBar)}</div>
			</div>
			<div class="row tall">
				<div class="bar gripped">
					{@render tools(drawBar)}
					{@render combo("", "弧参数", "s")}
					{@render tools(shapeBar)}
				</div>
				<div class="bar gripped stub"></div>
			</div>

			<div class="canvas">
				<svg width="100%" height="100%" role="img" aria-label="图纸">
					<rect x="199" y="113" width="213" height="213" fill="#7a00f0" />
					<rect x="199" y="326" width="213" height="141" fill="#f0f0f0" />
					<g stroke="#f00" shape-rendering="crispEdges">
						<path d="M0 112.500H4000M0 218.500H4000M0 325.500H4000M0 502.500H4000" />
						<path d="M198.500 0V2000M411.500 0V2000M216.500 0V218M305.500 0V218M393.500 0V218M446.500 0V218M234.500 219V2000M376.500 219V2000" />
					</g>
					<ellipse cx="335" cy="258" rx="227" ry="237" fill="none" stroke="#f00" stroke-width="3" shape-rendering="crispEdges" />
					<g fill="none" stroke="#0a840a" shape-rendering="crispEdges">
						<circle cx="216.500" cy="13" r="12.500" />
						<circle cx="13" cy="219" r="12.500" />
					</g>
					<g class="tag" fill="#e4e4e4" text-anchor="middle">
						<text x="217" y="18">2</text>
						<text x="13" y="224">A1</text>
					</g>
					<path d="M55 458V416" stroke="#0f0" stroke-width="4" />
					<path d="M55 408l4 11h-8z" fill="#0f0" />
					<path d="M55 457H94" stroke="#f00" stroke-width="4" />
					<path d="M105 457l-12 4v-8z" fill="#f00" />
					<path d="M64 411l5 5 5-5M69 416v5" fill="none" stroke="#0f0" />
					<path d="M92 437l9 9M101 437l-9 9" stroke="#f00" />
				</svg>
			</div>

			<div class="row bottom">
				<div class="bar gripped">{@render tools(snapBar)}</div>
				<div class="bar gripped">{@render tools(pointBar)}</div>
				<div class="bar gripped offset">
					{@render combo("不偏移", "偏移方式", "s")}
					<span class="sep"></span>
					<span>X=</span>
					{@render num("0", "X偏移", "s")}
					<span class="unit">mm</span>
					<span>Y=</span>
					{@render num("0", "Y偏移", "s")}
					<span class="unit">mm</span>
					<span class="sep"></span>
					<label><input type="checkbox" bind:checked={rotated} />旋转</label>
					{@render num("0.000", "旋转角度", "m")}
					<span>°</span>
				</div>
			</div>
		</main>
	</div>

	<footer class="status">
		<span class="mono w1">X=39370 Y=-12864</span>
		<span class="w2">层高<span class="mono">:2.8m</span></span>
		<span class="w3">底标高<span class="mono">:20.35m</span></span>
		<span class="mono w4">0</span>
		<span class="grow">按鼠标左键指定第一个角点，或拾取构件图元</span>
		<span class="mono w5">55 FPS</span>
	</footer>

	<div class="taskbar">
		<button class="start" aria-label="开始">{@render art("win")}</button>
		<label class="search">
			{@render art("circle")}
			<input type="text" placeholder="在这里输入你要搜索的内容" aria-label="搜索" />
			{@render art("mic")}
		</label>
		{#each pinned as p}
			<button class="pin" class:wide={p.wide} class:running={p.running} class:active={p.active} aria-label={p.name}>{@render art(p.art)}</button>
		{/each}
		<span class="link">链接</span>
		<span class="cpu">21%<br />CPU使用</span>
		<div class="tray">
			{#each ["chev", "bell", "battery", "wifi", "vol"] as t}
				{@render art(t)}
			{/each}
			<span class="keys">{@render art("kbd")}</span>
			<span class="lang">A</span>
			{@render art("sogou")}
		</div>
		<span class="clock">8:47<br />2018/7/19</span>
		<button class="notice" aria-label="通知">{@render art("notice")}<b>1</b></button>
	</div>
</div>

<style>
	:global(body) {
		overflow: hidden;
	}

	.window {
		position: relative;
		display: flex;
		flex-direction: column;
		height: 100vh;
		overflow: hidden;
		background: #f0f0f0;
		color: #000;
		font: 12px/16px "Noto Sans", "Noto Sans CJK SC", sans-serif;
		white-space: nowrap;
	}

	button {
		display: inline-flex;
		align-items: center;
		justify-content: center;
		padding: 0;
		border: 0;
		background: none;
		color: inherit;
		font: inherit;
		flex: none;
	}

	.ico {
		width: 16px;
		height: 16px;
		flex: none;
	}

	.art {
		width: 24px;
		height: 24px;
		flex: none;
	}

	.caret {
		width: 0;
		flex: none;
		margin: 0 7px 0 4px;
		border: 3px solid transparent;
		border-top-color: currentColor;
		border-bottom: 0;
	}

	.caret.tight {
		margin: 0 0 0 -2px;
	}

	/* title bar */
	.title {
		display: flex;
		align-items: center;
		gap: 5px;
		height: 23px;
		padding-left: 2px;
		background: #fff;
	}

	h1 {
		flex: 1;
		margin: 0;
		font: 12px/20px Inter, "Noto Sans CJK SC", sans-serif;
		overflow: hidden;
	}

	.winbtns {
		display: flex;
		align-self: flex-start;
		margin-right: 2px;
	}

	.winbtns button {
		width: 45px;
		height: 20px;
	}

	.ime {
		position: absolute;
		top: 3px;
		right: 190px;
		display: flex;
		align-items: center;
		gap: 6px;
		height: 22px;
		padding: 0 4px 0 34px;
		border: 1px solid #a9c3de;
		background: #fff;
	}

	.bump {
		position: absolute;
		top: -4px;
		left: 4px;
		width: 48px;
		height: 4px;
		border-radius: 0 0 20px 20px;
		background: #35c267;
	}

	.sogou {
		position: absolute;
		top: -3px;
		left: 2px;
		width: 25px;
		height: 25px;
		border-radius: 5px;
		background: #f4511e;
		color: #fff;
		font: bold 22px/25px "Liberation Sans", sans-serif;
		text-align: center;
		transform: rotate(-9deg);
	}

	.letter {
		width: 16px;
		color: #1f72c4;
		font: bold 18px/22px "Liberation Sans", sans-serif;
	}

	/* menu and tool bars */
	.menu {
		display: flex;
		align-items: center;
		gap: 10px;
		height: 29px;
		padding: 0 4px 0 7px;
	}

	.tool {
		gap: 4px;
		height: 24px;
		padding: 0 4px;
	}

	.menu .tool {
		margin: 0 -4px;
	}

	.menu .caret {
		margin: 0 -1px;
	}

	.tip {
		flex: 0 1 160px;
		padding: 4px 0 4px 28px;
		background: #f8f8f8;
		color: #336600;
		text-decoration: none;
	}

	.more {
		align-self: flex-start;
		margin-left: auto;
		padding-right: 4px;
		font: bold 14px/16px "Liberation Sans", sans-serif;
	}

	.row {
		display: flex;
		flex: none;
		gap: 4px;
		height: 28px;
	}

	.row.short {
		height: 27px;
	}

	.row.tall {
		height: 29px;
	}

	.row.top {
		gap: 2px;
		height: 32px;
		padding: 2px 0 3px 1px;
		box-sizing: border-box;
	}

	.bar {
		display: flex;
		align-items: center;
		height: 27px;
		border-radius: 3px;
		background: linear-gradient(#fcfcfc, #f1f1f1);
	}

	.files {
		width: 150px;
		gap: 3px;
		padding-left: 3px;
		box-sizing: border-box;
	}

	.files .caret {
		margin: 0 4px;
	}

	.files button {
		width: 17px;
	}

	.main {
		flex: 0 1 550px;
	}

	.main .tool {
		gap: 3px;
	}

	.view {
		flex: 1;
		min-width: 0;
	}

	.gripped {
		padding: 0 4px 0 8px;
		background: radial-gradient(circle at 2px 2px, #b4b4b4 1px, transparent 2px) 3px 5px / 4px 4px repeat-y, linear-gradient(#fcfcfc, #f1f1f1);
	}

	.axis {
		margin-left: auto;
		margin-right: 86px;
		padding: 0 2px 0 6px;
	}

	.stub {
		width: 18px;
	}

	.sep {
		width: 1px;
		height: 14px;
		margin: 0 2px;
		background: #b9b9b9;
		flex: none;
	}

	.sep.tall {
		height: 24px;
		background: #999;
	}

	.tool.on {
		height: 23px;
		padding: 0 3px;
		border: 1px solid #0078d7;
		background: #dcebf7;
		box-sizing: border-box;
	}

	.off {
		color: #8c8c8c;
	}

	.dropper {
		width: 12px;
	}

	.dropper .caret {
		margin: 0;
	}

	.combos {
		display: flex;
		gap: 3px;
		margin: 0 2px 0 1px;
	}

	.combo {
		display: inline-flex;
		align-items: center;
		height: 22px;
		background: linear-gradient(90deg, #fff calc(100% - 12px), #f3f3f3 0);
	}

	.combo.s {
		width: 56px;
	}

	.combo.m {
		width: 70px;
	}

	.combo select {
		flex: 1;
		min-width: 0;
		padding: 0 0 0 2px;
		border: 0;
		background: none;
		color: #000;
		font: inherit;
		appearance: none;
	}

	.combo .caret {
		margin: 0 3px;
		color: #000;
	}

	.mode {
		display: flex;
		align-items: center;
		gap: 1px;
		width: 62px;
		padding: 0 0 0 3px;
		box-sizing: border-box;
		background: #fff;
	}

	.mode .combo {
		flex: 1;
		min-width: 0;
	}

	/* navigation panel */
	.body {
		display: flex;
		flex: 1;
		min-height: 0;
		gap: 5px;
	}

	aside {
		display: flex;
		flex-direction: column;
		width: 212px;
		flex: none;
		padding-bottom: 3px;
		font-family: "Noto Sans CJK SC", sans-serif;
	}

	.caption {
		display: flex;
		align-items: center;
		gap: 2px;
		height: 15px;
		margin-bottom: 1px;
		background: #0055e5;
		color: #fff;
		font-size: 13px;
	}

	.caption span {
		flex: 1;
	}

	.section {
		height: 22px;
		border: 1px solid #a0a0a0;
		border-bottom-width: 0;
		box-sizing: border-box;
	}

	.section:last-child {
		border-bottom-width: 1px;
	}

	.panel {
		display: flex;
		flex-direction: column;
		flex: 1;
		min-height: 0;
		padding: 1px;
		border: 1px solid #a0a0a0;
	}

	.strip {
		display: flex;
		align-items: center;
		gap: 7px;
		height: 26px;
		padding-left: 5px;
		flex: none;
		background: linear-gradient(#fff, #eee);
	}

	.treebox {
		display: flex;
		flex: 1;
		min-height: 0;
		border: 1px solid #828790;
		background: #fff;
	}

	.tree {
		flex: 1;
		margin: 0;
		padding: 1px 0 0 4px;
		overflow: hidden;
		list-style: none;
	}

	.tree li {
		display: flex;
		align-items: center;
		height: 16px;
	}

	.guide {
		width: 19px;
		height: 16px;
		flex: none;
	}

	.node {
		display: flex;
		height: 16px;
	}

	.name {
		padding-left: 4px;
	}

	.selected {
		background: #d9d9d9;
	}

	.key,
	.mono {
		font: 10px/16px "Liberation Mono", monospace;
	}

	.new {
		align-self: flex-start;
		margin-left: 1px;
		background: #ffd800;
		font: bold 8px/8px "Liberation Sans", sans-serif;
	}

	.scroll {
		display: flex;
		flex-direction: column;
		width: 16px;
		background: #f0f0f0;
	}

	.thumb {
		flex: 1;
		margin: 28px 0 15px;
		background: #cdcdcd;
	}

	/* drawing area */
	main {
		display: flex;
		flex-direction: column;
		flex: 1;
		min-width: 0;
	}

	.canvas {
		flex: 1;
		min-height: 0;
		background: #000;
	}

	.canvas svg {
		display: block;
	}

	.tag {
		font: 14px "Liberation Sans", sans-serif;
	}

	.bottom {
		gap: 2px;
		height: 32px;
		padding-top: 2px;
		box-sizing: border-box;
	}

	.bottom .gripped {
		padding: 0 1px 0 7px;
	}

	.offset {
		color: #777;
	}

	.offset label {
		display: flex;
		align-items: center;
		gap: 8px;
		margin: 0 3px 0 2px;
		color: #000;
	}

	.offset label input {
		width: 11px;
		height: 11px;
		margin: 0;
		border: 1px solid #999;
		appearance: none;
	}

	.unit {
		margin-right: 4px;
	}

	.num {
		display: flex;
		align-items: center;
		height: 23px;
		margin: 0 1px 0 3px;
		border: 1px solid #707070;
		box-sizing: border-box;
	}

	.num.s {
		width: 58px;
	}

	.num.m {
		width: 68px;
	}

	.num input {
		flex: 1;
		min-width: 0;
		padding: 0;
		border: 0;
		background: none;
		color: #888;
		font: inherit;
		text-align: right;
	}

	.spin {
		display: flex;
		flex-direction: column;
		gap: 7px;
		padding: 0 4px 0 8px;
	}

	.spin .caret {
		margin: 0;
	}

	.flip {
		transform: rotate(180deg);
	}

	/* status bar */
	.status {
		display: flex;
		gap: 2px;
		height: 21px;
		flex: none;
		font-family: "Noto Sans CJK SC", sans-serif;
	}

	.status > span {
		padding: 1px;
		border: 1px solid #d5d5d5;
		box-sizing: border-box;
		background: linear-gradient(#fff, #f2f2f2);
		line-height: 18px;
	}

	.w1 {
		width: 148px;
	}

	.w2 {
		width: 78px;
	}

	.w3 {
		width: 98px;
	}

	.w4 {
		width: 48px;
	}

	.w5 {
		width: 70px;
	}

	.grow {
		flex: 1;
	}

	/* task bar */
	.taskbar {
		display: flex;
		align-items: stretch;
		height: 40px;
		flex: none;
		background: #000c10;
		color: #fff;
	}

	.start {
		width: 48px;
		background: #000;
	}

	.search {
		display: flex;
		align-items: center;
		gap: 4px;
		width: 344px;
		padding: 0 8px;
		box-sizing: border-box;
		background: #333;
	}

	.search input {
		flex: 1;
		min-width: 0;
		padding: 0;
		border: 0;
		background: none;
		color: #fff;
		font: 14px/20px "Noto Sans CJK SC", sans-serif;
	}

	.search input::placeholder {
		color: #999;
	}

	.pin {
		width: 45px;
	}

	.pin.wide {
		width: 51px;
	}

	.running {
		background: linear-gradient(#76b9ed, #76b9ed) center bottom / 36px 2px no-repeat;
	}

	.active {
		background: linear-gradient(#76b9ed, #76b9ed) center bottom / 100% 2px no-repeat #3a4449;
	}

	.link {
		align-self: center;
		margin-left: 11px;
	}

	.cpu {
		margin: 3px auto 0 20px;
		line-height: 17px;
		text-align: center;
	}

	.tray {
		display: flex;
		align-items: center;
	}

	.keys {
		display: flex;
		padding: 0 5px 0 4px;
	}

	.lang {
		width: 22px;
		margin-right: 5px;
		font-size: 18px;
		text-align: center;
	}

	.clock {
		width: 60px;
		margin: 1px 0 0 13px;
		line-height: 19px;
		text-align: center;
	}

	.notice {
		position: relative;
		width: 56px;
		box-sizing: border-box;
		border-right: 1px solid #555;
		margin-right: 4px;
		background: #000;
	}

	.notice b {
		position: absolute;
		right: 12px;
		bottom: 5px;
		width: 16px;
		height: 16px;
		border-radius: 8px;
		background: #333;
		line-height: 16px;
	}
</style>
